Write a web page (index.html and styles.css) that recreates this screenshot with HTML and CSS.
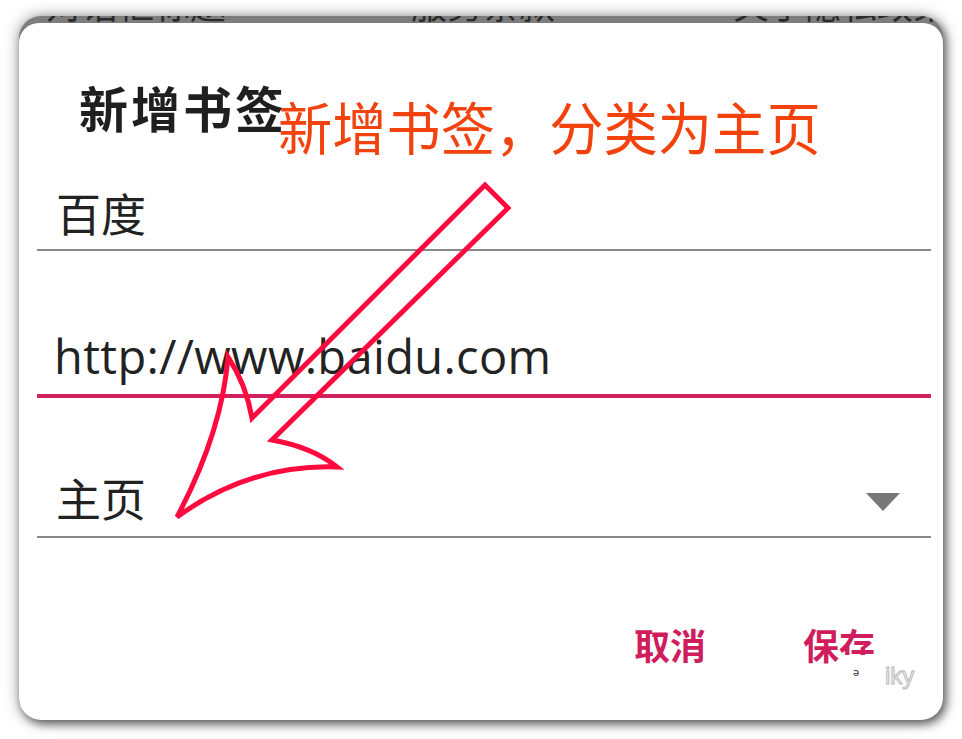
FILE: index.html
```html
<!DOCTYPE html>
<html lang="zh">
<head>
<meta charset="utf-8">
<title>新增书签</title>
<link rel="stylesheet" href="styles.css">
</head>
<body>
<div class="page">
  <div class="frame">
    <div class="behind">
      <span class="b1">对话框标题</span>
      <span class="b2">服务条款</span>
      <span class="b3">关于隐私政策</span>
    </div>
    <div class="dialog">
      <div class="title">新增书签</div>
      <div class="field f1"><span class="val">百度</span></div>
      <div class="field f2 active"><span class="val url">http://www.baidu.com</span></div>
      <div class="field f3">
        <span class="val">主页</span>
        <svg class="caret" width="34" height="18" viewBox="0 0 34 18"><path d="M0 0 H34 L17 18 Z" fill="#777"/></svg>
      </div>
      <div class="actions">
        <span class="btn">取消</span>
        <span class="btn">保存</span>
      </div>
    </div>
  </div>
</div>

<div class="note">新增书签，分类为主页</div>
<svg class="arrow" width="962" height="739" viewBox="0 0 962 739">
  <path d="M485 185 L508 208 L272 440 Q312 447 337 467 Q250 464 177 517 Q222 432 228 357 Q246 384 252 418 Z"
        fill="none" stroke="#ff0a3e" stroke-width="5" stroke-linejoin="miter"/>
</svg>
<div class="mask"></div>
<div class="wm-dot">ə</div>
<div class="wm">iky</div>
</body>
</html>
```

FILE: styles.css
```css
html, body {
  margin: 0;
  padding: 0;
  background: #ffffff;
}
body {
  font-family: "Noto Sans CJK SC", "Noto Sans", sans-serif;
  width: 962px;
  height: 739px;
  overflow: hidden;
  position: relative;
}
.page {
  padding: 16px 19px 0 19px;
}
.frame {
  width: 924px;
  height: 704px;
  border-radius: 22px;
  overflow: hidden;
  background: #7d7d7d;
  box-shadow: 3px 4px 10px rgba(0, 0, 0, 0.55), 0 0 16px rgba(0, 0, 0, 0.35);
}
.behind {
  height: 7px;
  overflow: hidden;
  display: flex;
  color: #2a2a2a;
  font-size: 36px;
  line-height: 36px;
  white-space: nowrap;
}
.behind span {
  margin-top: -31px;
}
.b1 { padding-left: 27px; }
.b2 { padding-left: 185px; }
.b3 { padding-left: 178px; }
.dialog {
  height: 697px;
  background: #ffffff;
  border-radius: 20px;
  display: flex;
  flex-direction: column;
}
.title {
  margin-top: 60px;
  padding-left: 60px;
  font-size: 49px;
  line-height: 48px;
  font-weight: 700;
  letter-spacing: 3px;
  color: #1f1f1f;
}
.field {
  margin: 0 12px 0 18px;
  padding-left: 19px;
  border-bottom: 2px solid #888888;
  display: flex;
  align-items: center;
}
.val {
  font-size: 45px;
  line-height: 44px;
  color: #222222;
}
.f1 {
  margin-top: 60px;
  padding-bottom: 14px;
}
.f2 {
  margin-top: 82px;
  padding-bottom: 14px;
  padding-left: 17px;
  border-bottom: 4px solid #d0205e;
}
.url {
  font-family: "Open Sans", "Noto Sans CJK SC", sans-serif;
  font-size: 47px;
  line-height: 47px;
  letter-spacing: 0.35px;
}
.f3 {
  margin-top: 78px;
  padding-bottom: 16px;
  justify-content: space-between;
}
.caret {
  margin-right: 31px;
  margin-top: 8px;
}
.actions {
  margin-top: 88px;
  display: flex;
  justify-content: flex-end;
  gap: 97px;
  padding-right: 68px;
}
.btn {
  font-size: 36px;
  line-height: 36px;
  font-weight: 700;
  color: #cf1d5d;
}
.note {
  position: absolute;
  left: 278px;
  top: 97px;
  font-size: 57px;
  line-height: 57px;
  color: #f2420e;
  white-space: nowrap;
  transform: scaleX(0.952);
  transform-origin: left top;
}
.arrow {
  position: absolute;
  left: 0;
  top: 0;
  pointer-events: none;
}
.mask {
  position: absolute;
  left: 842px;
  top: 655px;
  width: 40px;
  height: 12px;
  background: #ffffff;
}
.wm-dot {
  position: absolute;
  left: 853px;
  top: 668px;
  font-family: "DejaVu Sans", sans-serif;
  font-size: 10px;
  line-height: 10px;
  color: #333;
}
.wm {
  position: absolute;
  left: 885px;
  top: 662px;
  font-family: "Liberation Sans", sans-serif;
  font-size: 24px;
  line-height: 28px;
  color: #f4f4f4;
  -webkit-text-stroke: 1px #b9b9b9;
}
```
